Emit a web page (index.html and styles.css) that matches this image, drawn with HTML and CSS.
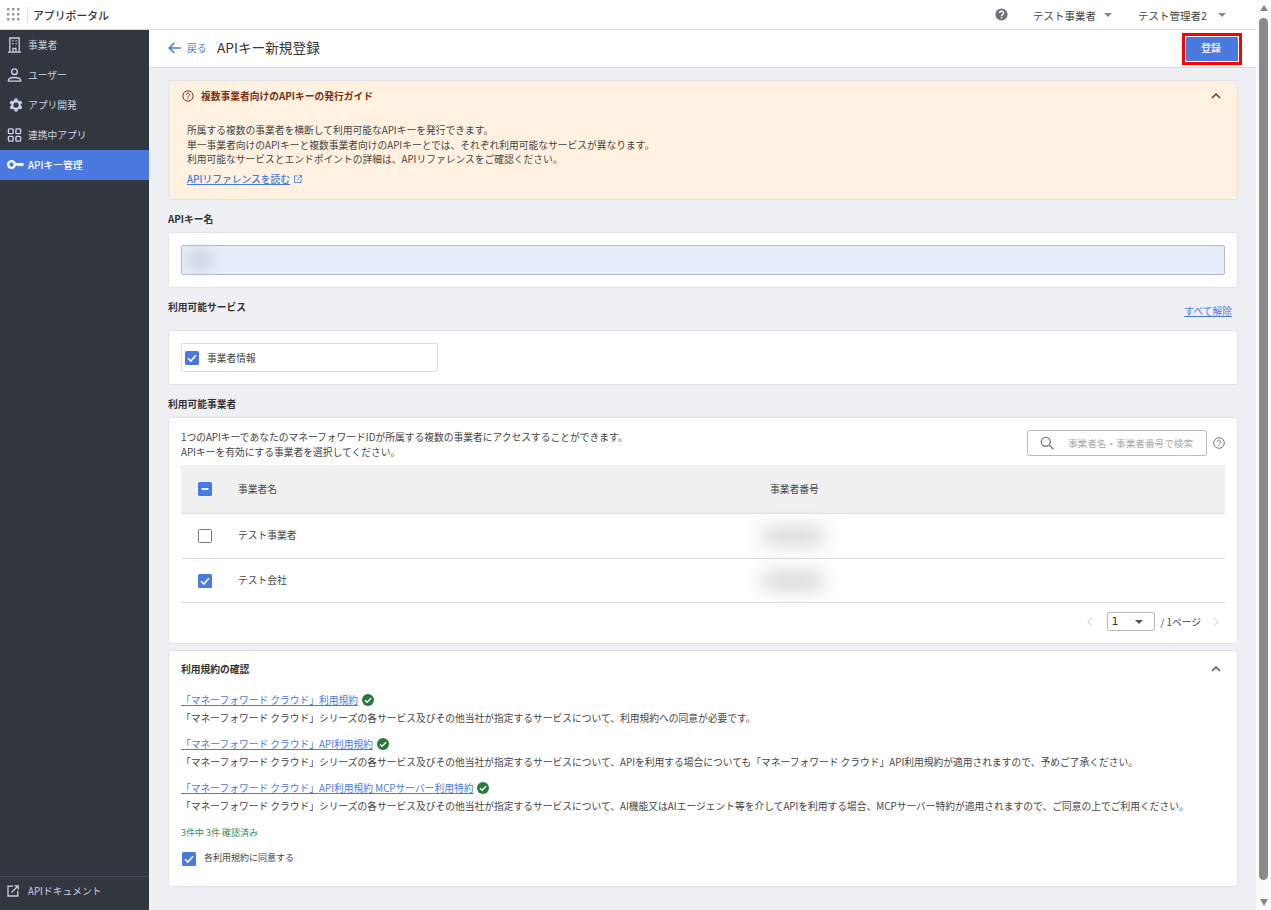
FILE: index.html
```html
<!DOCTYPE html>
<html lang="ja">
<head>
<meta charset="utf-8">
<title>APIキー新規登録</title>
<link rel="stylesheet" href="styles.css">
</head>
<body>
<div class="app">
  <div class="page">
    <header class="topbar">
      <div class="brand">
        <svg class="apps" viewBox="0 0 13 13" width="13" height="13"><g fill="#9a9a9a"><rect x="0" y="0" width="2.5" height="2.5"/><rect x="5" y="0" width="2.5" height="2.5"/><rect x="10" y="0" width="2.5" height="2.5"/><rect x="0" y="5" width="2.5" height="2.5"/><rect x="5" y="5" width="2.5" height="2.5"/><rect x="10" y="5" width="2.5" height="2.5"/><rect x="0" y="10" width="2.5" height="2.5"/><rect x="5" y="10" width="2.5" height="2.5"/><rect x="10" y="10" width="2.5" height="2.5"/></g></svg>
        <span class="brand-sep"></span>
        <span class="brand-name">アプリポータル</span>
      </div>
      <div class="top-right">
        <svg class="top-help" viewBox="0 0 14 14" width="13" height="13"><circle cx="7" cy="7" r="6.5" fill="#6f7278"/><path d="M4.9 5.4a2.1 2.1 0 1 1 3.2 1.8c-.7.4-1.1.8-1.1 1.5" fill="none" stroke="#fff" stroke-width="1.5"/><rect x="6.2" y="9.6" width="1.6" height="1.6" fill="#fff"/></svg>
        <span class="top-menu top-menu-a">テスト事業者<i class="caret"></i></span>
        <span class="top-menu top-menu-b">テスト管理者2<i class="caret"></i></span>
      </div>
    </header>
    <div class="body">
      <aside class="sidebar">
        <nav class="nav">
          <a class="nav-item"><svg viewBox="0 0 16 18" width="15" height="17" fill="none" stroke="#c9d2e6" stroke-width="1.4"><path d="M1 16.5h14M3 16.5V1.500h10v15"/><path d="M6.5 16.5v-4h3v4"/><path d="M5.5 4.500h1.500M9 4.500h1.500M5.500 7.500h1.500M9 7.500h1.500"/></svg><span>事業者</span></a>
          <a class="nav-item"><svg viewBox="0 0 16 16" width="15" height="15" fill="none" stroke="#c9d2e6" stroke-width="1.5"><circle cx="8" cy="4.5" r="3"/><path d="M1.500 14.500v-.8c0-1.800 2-3 6.500-3s6.500 1.200 6.500 3v.8z"/></svg><span>ユーザー</span></a>
          <a class="nav-item"><svg viewBox="0 0 24 24" width="18" height="18" fill="#c9d2e6"><path d="M19.4 13a7.600 7.600 0 0 0 0-2l2.100-1.600-2-3.500-2.500 1a7.500 7.500 0 0 0-1.700-1L15 3.200h-4l-.4 2.700a7.500 7.500 0 0 0-1.700 1l-2.500-1-2 3.500L6.500 11a7.600 7.600 0 0 0 0 2l-2.100 1.600 2 3.500 2.500-1a7.500 7.500 0 0 0 1.700 1l.4 2.700h4l.4-2.700a7.500 7.500 0 0 0 1.700-1l2.500 1 2-3.500zM13 15.500a3.500 3.500 0 1 1 0-7 3.500 3.500 0 0 1 0 7z" transform="translate(-1 0)"/></svg><span>アプリ開発</span></a>
          <a class="nav-item"><svg viewBox="0 0 16 16" width="15" height="15" fill="none" stroke="#c9d2e6" stroke-width="1.500"><rect x="1.500" y="1.500" width="5" height="5" rx="1"/><rect x="9.500" y="1.500" width="5" height="5" rx="1"/><rect x="1.500" y="9.500" width="5" height="5" rx="1"/><rect x="9.500" y="9.500" width="5" height="5" rx="1"/></svg><span>連携中アプリ</span></a>
          <a class="nav-item active"><svg viewBox="0 0 17 10" width="17" height="10"><path fill="#fff" d="M4.500 0a4.500 4.500 0 1 1 0 9 4.500 4.500 0 0 1 0-9zm0 2.300a2.200 2.200 0 1 0 0 4.400 2.200 2.200 0 0 0 0-4.400z"/><path fill="#fff" d="M8.500 3h8v2.200l-1 1.300-1-1-1 1-1-1-1 1-1-1H8.500z"/></svg><span>APIキー管理</span></a>
        </nav>
        <a class="side-foot"><svg viewBox="0 0 12 12" width="12" height="12" fill="none" stroke="#c9d2e6" stroke-width="1.300"><path d="M6 1.200H1v9.800h9.800V6"/><path d="M4.500 7.500L11 1M7.500 .8H11.200V4.500"/></svg><span>APIドキュメント</span></a>
      </aside>
      <main class="main">
        <div class="head">
          <a class="back"><svg viewBox="0 0 14 12" width="14" height="12" fill="none" stroke="#4a7ae0" stroke-width="1.500"><path d="M13 6H1.500M6.200 1L1.200 6l5 5"/></svg><span>戻る</span></a>
          <h1 class="title">APIキー新規登録</h1>
          <span class="submit-ring"><button class="submit">登録</button></span>
        </div>
        <div class="content">
          <section class="guide">
            <div class="guide-head">
              <svg viewBox="0 0 12 12" width="12" height="12" fill="none" stroke="#7b2f12" stroke-width="1"><circle cx="6" cy="6" r="5.200"/><path d="M4.400 4.700a1.600 1.600 0 1 1 2.500 1.300c-.6.400-.9.700-.9 1.300M6 8.200v1"/></svg>
              <strong>複数事業者向けのAPIキーの発行ガイド</strong>
              <svg class="chev" viewBox="0 0 10 6" width="10" height="6" fill="none" stroke="#7b2f12" stroke-width="1.500"><path d="M1 5l4-4 4 4"/></svg>
            </div>
            <div class="guide-body">
              <p>所属する複数の事業者を横断して利用可能なAPIキーを発行できます。</p>
              <p>単一事業者向けのAPIキーと複数事業者向けのAPIキーとでは、それぞれ利用可能なサービスが異なります。</p>
              <p>利用可能なサービスとエンドポイントの詳細は、APIリファレンスをご確認ください。</p>
              <a class="guide-link"><span>APIリファレンスを読む</span><svg viewBox="0 0 9 9" width="8" height="8" fill="none" stroke="#4a7ae0" stroke-width="1"><path d="M4 1H.5v7.500H8V5M3.500 5.500L8.500 .5M5.500 .5h3v3"/></svg></a>
            </div>
          </section>

          <div class="label label-key">APIキー名</div>
          <section class="card card-key">
            <div class="key-input"><span class="smudge smudge-key"></span></div>
          </section>

          <div class="label-row">
            <div class="label">利用可能サービス</div>
            <a class="link clear">すべて解除</a>
          </div>
          <section class="card card-service">
            <label class="service">
              <span class="cb on"><svg viewBox="0 0 14 14"><path d="M3 7.300l2.800 2.800L11 4.300" fill="none" stroke="#fff" stroke-width="1.500"/></svg></span>
              <span>事業者情報</span>
            </label>
          </section>

          <div class="label label-biz">利用可能事業者</div>
          <section class="card card-biz">
            <div class="biz-top">
              <p class="biz-text">1つのAPIキーであなたのマネーフォワードIDが所属する複数の事業者にアクセスすることができます。<br>APIキーを有効にする事業者を選択してください。</p>
              <div class="search-wrap">
                <div class="search">
                  <svg viewBox="0 0 14 14" width="14" height="14" fill="none" stroke="#777" stroke-width="1.300"><circle cx="5.800" cy="5.800" r="4.500"/><path d="M9 9l4.300 4.300"/></svg>
                  <span>事業者名・事業者番号で検索</span>
                </div>
                <svg viewBox="0 0 12 12" width="12" height="12" fill="none" stroke="#777" stroke-width="1"><circle cx="6" cy="6" r="5.300"/><path d="M4.400 4.700a1.600 1.600 0 1 1 2.500 1.300c-.6.400-.9.700-.9 1.300M6 8.200v1"/></svg>
              </div>
            </div>
            <div class="table">
              <div class="tr th">
                <span class="td-cb"><span class="cb on"><svg viewBox="0 0 14 14"><path d="M3.500 7h7" stroke="#fff" stroke-width="1.800"/></svg></span></span>
                <span class="td-name">事業者名</span>
                <span class="td-num">事業者番号</span>
              </div>
              <div class="tr row-a">
                <span class="td-cb"><span class="cb off"></span></span>
                <span class="td-name">テスト事業者</span>
                <span class="td-num"><span class="smudge smudge-num"></span></span>
              </div>
              <div class="tr row-b">
                <span class="td-cb"><span class="cb on"><svg viewBox="0 0 14 14"><path d="M3 7.300l2.800 2.800L11 4.300" fill="none" stroke="#fff" stroke-width="1.500"/></svg></span></span>
                <span class="td-name">テスト会社</span>
                <span class="td-num"><span class="smudge smudge-num"></span></span>
              </div>
            </div>
            <div class="pager">
              <svg viewBox="0 0 6 10" width="6" height="10" fill="none" stroke="#ddd" stroke-width="1.200"><path d="M5 1L1 5l4 4"/></svg>
              <span class="page-select"><span>1</span><i class="caret dark"></i></span>
              <span class="page-total">/ 1ページ</span>
              <svg viewBox="0 0 6 10" width="6" height="10" fill="none" stroke="#ddd" stroke-width="1.200"><path d="M1 1l4 4-4 4"/></svg>
            </div>
          </section>

          <section class="card card-terms">
            <div class="terms-head">
              <strong>利用規約の確認</strong>
              <svg viewBox="0 0 10 6" width="10" height="6" fill="none" stroke="#555" stroke-width="1.500"><path d="M1 5l4-4 4 4"/></svg>
            </div>
            <div class="term">
              <div class="term-title"><a class="link">「マネーフォワード クラウド」利用規約</a><svg class="ok" viewBox="0 0 12 12" width="12" height="12"><circle cx="6" cy="6" r="6" fill="#2a7a3b"/><path d="M3 6.200l2.100 2.100L9 4.300" fill="none" stroke="#fff" stroke-width="1.400"/></svg></div>
              <p>「マネーフォワード クラウド」シリーズの各サービス及びその他当社が指定するサービスについて、利用規約への同意が必要です。</p>
            </div>
            <div class="term">
              <div class="term-title"><a class="link">「マネーフォワード クラウド」API利用規約</a><svg class="ok" viewBox="0 0 12 12" width="12" height="12"><circle cx="6" cy="6" r="6" fill="#2a7a3b"/><path d="M3 6.200l2.100 2.100L9 4.300" fill="none" stroke="#fff" stroke-width="1.400"/></svg></div>
              <p>「マネーフォワード クラウド」シリーズの各サービス及びその他当社が指定するサービスについて、APIを利用する場合についても「マネーフォワード クラウド」API利用規約が適用されますので、予めご了承ください。</p>
            </div>
            <div class="term">
              <div class="term-title"><a class="link">「マネーフォワード クラウド」API利用規約 MCPサーバー利用特約</a><svg class="ok" viewBox="0 0 12 12" width="12" height="12"><circle cx="6" cy="6" r="6" fill="#2a7a3b"/><path d="M3 6.200l2.100 2.100L9 4.300" fill="none" stroke="#fff" stroke-width="1.400"/></svg></div>
              <p>「マネーフォワード クラウド」シリーズの各サービス及びその他当社が指定するサービスについて、AI機能又はAIエージェント等を介してAPIを利用する場合、MCPサーバー特約が適用されますので、ご同意の上でご利用ください。</p>
            </div>
            <div class="count">3件中 3件 確認済み</div>
            <label class="agree">
              <span class="cb on"><svg viewBox="0 0 14 14"><path d="M3 7.300l2.800 2.800L11 4.300" fill="none" stroke="#fff" stroke-width="1.500"/></svg></span>
              <span class="agree-text">各利用規約に同意する</span>
            </label>
          </section>
        </div>
      </main>
    </div>
  </div>
  <div class="scrollbar">
    <i class="sb-up"></i>
    <div class="sb-thumb"></div>
    <i class="sb-down"></i>
  </div>
</div>
</body>
</html>
```

FILE: styles.css
```css
* { box-sizing: border-box; }
html, body { margin: 0; height: 100%; overflow: hidden; }
body {
  font-family: "Noto Sans CJK JP", "Noto Sans", sans-serif;
  font-size: 9.75px;
  color: #333;
  background: #fff;
}
p { margin: 0; }
svg { display: block; flex: none; }
.app { display: flex; width: 1271px; height: 910px; }
.page { width: 1256px; display: flex; flex-direction: column; }

.topbar {
  height: 30px;
  border-bottom: 1px solid #d8dade;
  display: flex;
  align-items: center;
  justify-content: space-between;
  background: #fff;
  flex: none;
}
.brand { display: flex; align-items: center; padding-left: 7px; }
.brand-sep { width: 1px; height: 15px; background: #ddd; margin: 0 5px 0 7px; }
.brand-name { font-size: 10.85px; font-weight: 500; color: #333; }
.top-right { display: flex; align-items: center; color: #444; font-size: 10.5px; }
.top-help { margin-right: 25px; }
.top-menu { display: flex; align-items: center; padding-top: 1px; }
.top-menu-a { width: 105px; }
.top-menu-b { width: 118px; }
.caret {
  width: 0; height: 0;
  border-left: 4px solid transparent;
  border-right: 4px solid transparent;
  border-top: 4px solid #888;
  margin-left: 9px;
}
.top-menu-a .caret { margin-left: 8px; }
.top-menu-b .caret { margin-left: 11px; }

.body { flex: 1; display: flex; min-height: 0; }
.sidebar {
  width: 149px;
  background: #31363f;
  display: flex;
  flex-direction: column;
  justify-content: space-between;
  flex: none;
}
.nav-item {
  height: 30px;
  display: flex;
  align-items: center;
  color: #c9d2e6;
  position: relative;
}
.nav-item svg { position: absolute; left: 7px; top: 50%; transform: translateY(-50%); }
.nav-item span { margin-left: 28px; padding-bottom: 1px; }
.nav-item.active { background: #4a7ae0; color: #fff; font-weight: 500; }
.side-foot {
  height: 34px;
  border-top: 1px solid #444a55;
  display: flex;
  align-items: center;
  padding: 0 0 6px 7px;
  color: #c9d2e6;
}
.side-foot span { margin-left: 9px; }

.main { flex: 1; background: #eff0f4; display: flex; flex-direction: column; min-width: 0; }
.head {
  height: 38px;
  background: #fff;
  border-bottom: 1px solid #d8dade;
  display: flex;
  align-items: center;
  padding: 0 14px 0 19px;
  flex: none;
}
.back { display: flex; align-items: center; gap: 5px; color: #4a7ae0; width: 49px; padding-bottom: 1px; }
.title { margin: 0; font-size: 13.65px; font-weight: 400; color: #333; flex: 1; padding-bottom: 3px; }
.submit-ring { display: block; border: 3px solid #f00; padding: 1px; height: 32px; width: 60px; }
.submit {
  display: block;
  width: 100%;
  height: 100%;
  border: 0;
  border-radius: 1px;
  background: #4a7ae0;
  color: #fff;
  font: 500 9.75px "Noto Sans CJK JP", sans-serif;
  padding: 0 2px 2px 0;
}

.content { padding: 12px 18px 0 19px; }
.card, .guide { border: 1px solid #e2e3e7; border-radius: 3px; background: #fff; }
.guide { background: #fff1df; height: 120px; padding: 0 16px 0 13px; }
.guide-head { height: 29px; display: flex; align-items: center; color: #7b2f12; gap: 7px; }
.guide-head strong { font-weight: 700; flex: 1; }
.guide-body { padding: 13px 0 0 5px; line-height: 14.67px; color: #444; }
.guide-link { display: flex; align-items: center; gap: 4px; margin-top: 5px; color: #4a7ae0; font-weight: 500; }
.guide-link span { text-decoration: underline; }

.label { font-weight: 700; color: #333; line-height: 15px; }
.label-key { margin-top: 12px; margin-bottom: 5px; height: 15px; }
.card-key { height: 56px; padding: 12px; }
.key-input {
  height: 30px;
  background: #e7eefb;
  border: 1px solid #b2b9c6;
  border-radius: 2px;
  padding: 4px 5px;
}
.smudge { display: block; background: #c9cedd; filter: blur(6px); }
.smudge-key { width: 26px; height: 20px; opacity: .7; }
.label-row { display: flex; justify-content: space-between; align-items: flex-start; height: 42px; padding-top: 12px; }
.link { color: #4a7ae0; text-decoration: underline; }
.clear { margin: 4px 6px 0 0; }
.card-service { height: 55px; padding: 12px; }
.service {
  width: 257px;
  height: 29px;
  border: 1px solid #dcdde1;
  border-radius: 2px;
  display: flex;
  align-items: center;
  padding-left: 3px;
  gap: 8px;
  color: #444;
}
.cb { width: 14px; height: 14px; border-radius: 1.500px; display: block; flex: none; }
.cb svg { width: 14px; height: 14px; }
.cb.on { background: #4a7ae0; }
.cb.off { border: 1.500px solid #777; }
.label-biz { margin-top: 12px; margin-bottom: 5px; height: 15px; }
.card-biz { height: 227px; padding: 12px 12px 0; }
.biz-top { display: flex; justify-content: space-between; height: 35px; }
.biz-text { line-height: 15px; color: #444; }
.search-wrap { display: flex; align-items: center; gap: 6px; height: 26px; }
.search {
  width: 180px;
  height: 26px;
  border: 1px solid #bbb;
  border-radius: 2px;
  display: flex;
  align-items: center;
  padding-left: 12px;
  gap: 14px;
  color: #aaa;
  font-size: 9.65px;
}
.tr { display: flex; align-items: center; border-bottom: 1px solid #dedede; }
.th { height: 49px; background: #f0f0f0; }
.row-a { height: 45px; }
.row-b { height: 44px; }
.td-cb { width: 57px; padding-left: 17px; }
.td-name { width: 532px; color: #444; }
.td-num { color: #444; }
.row-a .td-name, .row-b .td-name { padding-bottom: 2px; }
.smudge-num { width: 60px; height: 14px; background: #c8c8c8; filter: blur(10px); margin-left: -7px; }
.pager { display: flex; align-items: center; justify-content: flex-end; height: 40px; padding-bottom: 3px; }
.page-select {
  width: 48px;
  height: 19px;
  margin: 0 6px 0 14px;
  border: 1px solid #bbb;
  border-radius: 2px;
  display: flex;
  align-items: center;
  justify-content: space-between;
  padding: 0 11px 0 4px;
  font: 11px "DejaVu Sans", sans-serif;
  color: #333;
}
.caret.dark { border-top-color: #555; }
.page-total { margin-right: 12px; color: #444; }
.pager svg:last-child { margin-right: 6px; }

.card-terms { margin-top: 6px; height: 237px; padding: 0 16px 0 12px; }
.terms-head { height: 35px; display: flex; align-items: center; justify-content: space-between; }
.terms-head strong { font-weight: 700; color: #333; }
.term { margin-top: 4px; height: 40px; color: #444; }
.term-title { display: flex; align-items: center; gap: 4px; height: 19px; }
.term p { line-height: 18px; }
.count { margin-top: 8px; color: #3f8a5a; font-size: 9px; line-height: 14px; }
.agree { display: flex; align-items: center; gap: 8px; margin-top: 11px; padding-left: 1px; color: #444; font-size: 9px; }
.agree-text { padding-bottom: 2px; }

.scrollbar { width: 15px; background: #fafafa; display: flex; flex-direction: column; align-items: center; }
.sb-thumb { width: 9px; height: 862px; background: #8a8a8a; border-radius: 4.5px; margin: 7px 0 19px; }
.sb-up, .sb-down { width: 0; height: 0; border-left: 4.5px solid transparent; border-right: 4.5px solid transparent; }
.sb-up { border-bottom: 6px solid #8a8a8a; margin-top: 5px; }
.sb-down { border-top: 7px solid #8a8a8a; }
```
